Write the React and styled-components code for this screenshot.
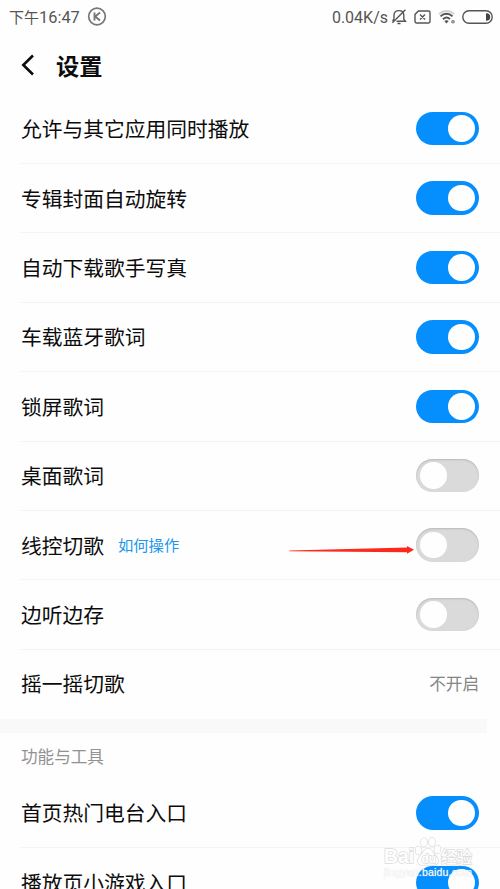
import React from 'react';
import styled, { createGlobalStyle } from 'styled-components';

const Global = createGlobalStyle`
  *, *::before, *::after { box-sizing: border-box; }
  html, body { margin: 0; padding: 0; background: #fefefe; overflow: hidden; }
`;

const Screen = styled.main`
  position: relative;
  width: 500px;
  height: 889px;
  overflow: hidden;
  background: #fefefe;
  color: #0c0c0c;
  font-family: "Noto Sans CJK SC", sans-serif;
`;

const StatusBar = styled.header`
  display: flex;
  align-items: center;
  justify-content: space-between;
  height: 34px;
  padding: 0 7px 0 9px;
  color: #555;
  font-size: 15.2px;
  line-height: 34px;
  white-space: nowrap;
`;

const StatusGroup = styled.div`
  display: flex;
  align-items: center;
`;

const Period = styled.span`
  font-size: 15px;
  line-height: 32px;
  padding-bottom: 1px;
`;

const Latin = styled.span`
  padding-top: 1px;
  font-family: Roboto, sans-serif;
  font-size: ${(p) => p.$size}px;
`;

const Glyph = styled.svg`
  display: block;
  flex: none;
  margin-left: ${(p) => p.$gap || 0}px;
`;

const TitleBar = styled.div`
  display: flex;
  align-items: center;
  height: 60.4px;
  padding: 1px 0 0 21px;
`;

const Title = styled.h1`
  margin: 0 0 0 21px;
  font-size: 23.2px;
  line-height: 34px;
  font-weight: 700;
`;

const Row = styled.div`
  display: flex;
  align-items: center;
  height: 69.43px;
  margin-left: 21px;
  padding-right: 21px;
  border-bottom: 1px solid ${(p) => (p.$last ? 'transparent' : '#f3f3f3')};
`;

const Label = styled.span`
  padding-bottom: 1px;
  font-size: 20.75px;
  line-height: 30px;
  white-space: nowrap;
`;

const HelpLink = styled.a`
  margin-left: 14px;
  padding-bottom: 2px;
  color: #2196ea;
  font-size: 15.3px;
  line-height: 24px;
`;

const Value = styled.span`
  margin-left: auto;
  padding-bottom: 1px;
  color: #858585;
  font-size: 16.6px;
`;

const Toggle = styled.span`
  display: flex;
  align-items: center;
  justify-content: ${(p) => (p.$on ? 'flex-end' : 'flex-start')};
  width: 63px;
  height: 33.5px;
  margin-left: auto;
  padding: 0 4px;
  border-radius: 17px;
  background: ${(p) => (p.$on ? '#058ffe' : '#dadada')};
  box-shadow: ${(p) => (p.$on ? 'none' : 'inset 0 1px 2px #b9b9b9')};
`;

const Knob = styled.span`
  width: 26.6px;
  height: 26.6px;
  border-radius: 50%;
  background: #fefefe;
`;

const Band = styled.div`
  width: 487px;
  height: 13.6px;
  background: #f9f9f9;
`;

const SectionTitle = styled.h2`
  height: 46px;
  margin: 0;
  padding-left: 21px;
  color: #919191;
  font-size: 16.6px;
  font-weight: 400;
  line-height: 46px;
`;

const Arrow = styled.svg`
  position: absolute;
  left: 288px;
  top: 543px;
`;

const Watermark = styled.svg`
  position: absolute;
  left: 380px;
  top: 832px;
  font-family: "Liberation Sans", "Noto Sans CJK SC", sans-serif;
`;

const playback = [
  { label: '允许与其它应用同时播放', on: true },
  { label: '专辑封面自动旋转', on: true },
  { label: '自动下载歌手写真', on: true },
  { label: '车载蓝牙歌词', on: true },
  { label: '锁屏歌词', on: true },
  { label: '桌面歌词', on: false },
  { label: '线控切歌', on: false, help: '如何操作' },
  { label: '边听边存', on: false },
  { label: '摇一摇切歌', value: '不开启' },
];

const tools = [
  { label: '首页热门电台入口', on: true },
  { label: '播放页小游戏入口', on: true },
];

function Setting({ item, last }) {
  return (
    <Row $last={last}>
      <Label>{item.label}</Label>
      {item.help && <HelpLink>{item.help}</HelpLink>}
      {item.value ? (
        <Value>{item.value}</Value>
      ) : (
        <Toggle $on={item.on} role="switch" aria-checked={item.on}>
          <Knob />
        </Toggle>
      )}
    </Row>
  );
}

function Status() {
  return (
    <StatusBar>
      <StatusGroup>
        <Period>下午</Period>
        <Latin $size={16.4}>16:47</Latin>
        <Glyph $gap={7} width="20" height="20" viewBox="0 0 20 20" fill="none" stroke="#777">
          <circle cx="10" cy="9.5" r="8.3" strokeWidth="1.7" />
          <path d="M7.5 5.500v8M13 5.500l-4.800 4L13 13.500" strokeWidth="1.900" />
        </Glyph>
      </StatusGroup>
      <StatusGroup>
        <Latin $size={16}>0.04K/s</Latin>
        <Glyph $gap={3} width="16" height="18" viewBox="0 0 16 18" fill="none" stroke="#555" strokeWidth="1.4">
          <path d="M3 10.800V7.200C3 4 5 2.600 8 2.600s4.800 1.400 4.800 4.600v4l1.600 2H5.500M3 10.800l-1.400 2.400M6.500 15.500h3M14.400 1.800 1.400 14.800" />
        </Glyph>
        <Glyph $gap={7} width="17" height="14" viewBox="0 0 17 14" fill="none" stroke="#555" strokeWidth="1.4">
          <path d="M4.400 1h10.200c.8 0 1.400.6 1.400 1.400v9.200c0 .8-.6 1.400-1.400 1.400H2.400C1.600 13 1 12.400 1 11.600V4.400zM6 4.500l5 5M11 4.500l-5 5" />
        </Glyph>
        <Glyph $gap={7} width="18" height="16" viewBox="0 0 18 16" fill="none" strokeWidth="1.9">
          <path d="M1 5.200C5 1 12 1 16 5.200" stroke="#d2d2d2" />
          <path d="M2.500 7.400c3.500-3.600 8.500-3.600 12 0M5 10.200c2.200-2.100 4.900-2.100 7 0" stroke="#555" />
          <path d="m6.300 12 2.200 2.400 2.200-2.400c-1.300-1.100-3.100-1.100-4.400 0Z" fill="#555" />
          <circle cx="15" cy="12.800" r="1.200" stroke="#777" strokeWidth="1.200" />
        </Glyph>
        <Glyph $gap={6} width="31" height="14" viewBox="0 0 31 14" fill="none">
          <rect x=".8" y=".8" width="29.400" height="12.400" rx="6.200" stroke="#555" strokeWidth="1.400" />
          <path d="M24 3.200h.4a3.800 3.800 0 0 1 0 7.600H24z" fill="#444" />
        </Glyph>
      </StatusGroup>
    </StatusBar>
  );
}

export default function App() {
  return (
    <>
      <Global />
      <Screen>
        <Status />
        <TitleBar>
          <Glyph width="14" height="22" viewBox="0 0 14 22" fill="none" stroke="#0c0c0c" strokeWidth="2.600">
            <path d="M12 1.500 2.300 11 12 20.500" />
          </Glyph>
          <Title>设置</Title>
        </TitleBar>
        {playback.map((item, i) => (
          <Setting key={item.label} item={item} last={i === playback.length - 1} />
        ))}
        <Band />
        <SectionTitle>功能与工具</SectionTitle>
        {tools.map((item) => (
          <Setting key={item.label} item={item} />
        ))}
        <Arrow width="128" height="14" viewBox="0 0 128 14">
          <path d="M1.500 7.600 119 4.400V3l7 3.800-7 4V9.200L1.500 8.200Z" fill="#fb2a1c" />
        </Arrow>
        <Watermark width="100" height="57" viewBox="0 0 100 57" fill="#fefefe" stroke="#dcdcdc" strokeWidth="1.500" paintOrder="stroke">
          <text x="4" y="31" fontSize="20" fontWeight="700" textLength="30" lengthAdjust="spacingAndGlyphs">Bai</text>
          <ellipse cx="38.500" cy="18.500" rx="3" ry="4" />
          <ellipse cx="44" cy="10.500" rx="3" ry="4.200" />
          <ellipse cx="52" cy="10" rx="3" ry="4.200" />
          <ellipse cx="57.500" cy="17.500" rx="3" ry="4" />
          <path d="M48 16.500c4 0 5 5 8 8 5 5 1 9-3 8.500-4-.5-6-.5-10 0-4 .5-8-4-3-8.500 3-3 4-8 8-8Z" />
          <text x="41.500" y="30.500" fontSize="12" fontWeight="700" strokeWidth="1.300">du</text>
          <text x="61" y="30.500" fontSize="16" fontWeight="500" textLength="31" lengthAdjust="spacingAndGlyphs">经验</text>
          <text x="4" y="43.500" fontSize="10.500" stroke="#cfcfcf" strokeWidth=".7" strokeOpacity=".5" textLength="88">jingyan.baidu.com</text>
        </Watermark>
      </Screen>
    </>
  );
}
